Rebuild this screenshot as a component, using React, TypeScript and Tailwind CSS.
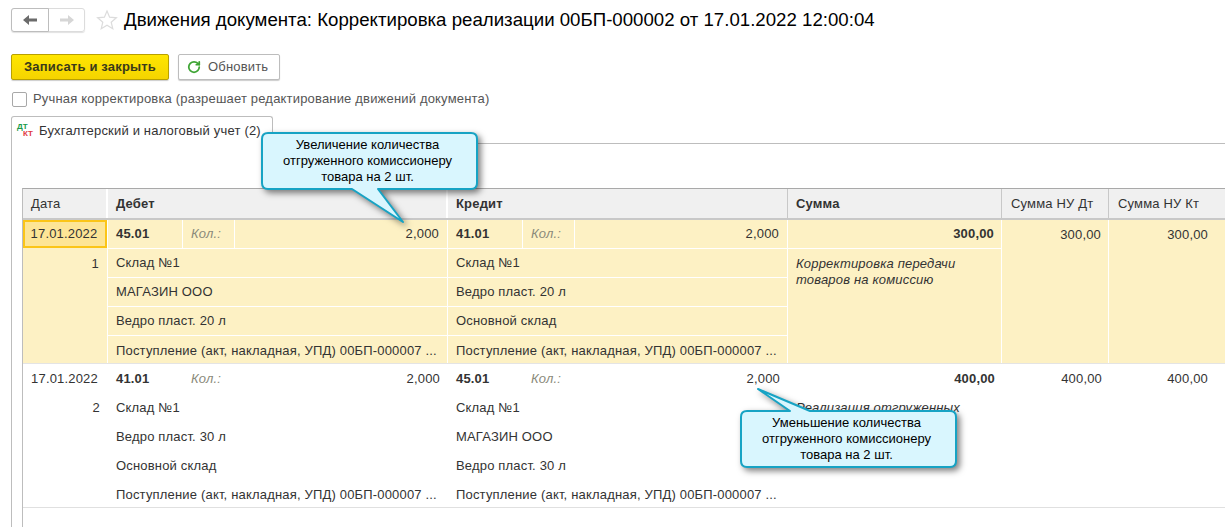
import type { ReactNode } from 'react';
import { RotateCw } from 'lucide-react';

const POST = 'Поступление (акт, накладная, УПД) 00БП-000007 ...';

type Entry = {
  date: string;
  num: string;
  debit: string;
  credit: string;
  debitLines: string[];
  creditLines: string[];
  sum: string;
  note: string[];
};

const entries: Entry[] = [
  {
    date: '17.01.2022',
    num: '1',
    debit: '45.01',
    credit: '41.01',
    debitLines: ['Склад №1', 'МАГАЗИН ООО', 'Ведро пласт. 20 л', POST],
    creditLines: ['Склад №1', 'Ведро пласт. 20 л', 'Основной склад', POST],
    sum: '300,00',
    note: ['Корректировка передачи', 'товаров на комиссию'],
  },
  {
    date: '17.01.2022',
    num: '2',
    debit: '41.01',
    credit: '45.01',
    debitLines: ['Склад №1', 'Ведро пласт. 30 л', 'Основной склад', POST],
    creditLines: ['Склад №1', 'МАГАЗИН ООО', 'Ведро пласт. 30 л', POST],
    sum: '400,00',
    note: ['Реализация отгруженных', 'товаров'],
  },
];

function Line({ children, divider, last }: { children: ReactNode; divider: boolean; last?: boolean }) {
  return (
    <div className={`flex h-[29px] items-center px-2 ${divider && !last ? 'border-b border-white' : ''}`}>
      {children}
    </div>
  );
}

function Account({ code, lines, divider }: { code: string; lines: string[]; divider: boolean }) {
  return (
    <div className={`w-[340px] ${divider ? 'border-r border-white' : ''}`}>
      <div className={`flex h-[29px] ${divider ? 'border-b border-white' : ''}`}>
        <div className={`flex w-[75px] items-center px-2 font-bold ${divider ? 'border-r border-white' : ''}`}>{code}</div>
        <div className={`flex w-[52px] items-center pl-2 italic text-[#8a8a7a] ${divider ? 'border-r border-white' : ''}`}>Кол.:</div>
        <div className="flex flex-1 items-center justify-end pr-2">2,000</div>
      </div>
      {lines.map((l, i) => (
        <Line key={i} divider={divider} last={i === lines.length - 1}>
          <span className="whitespace-nowrap">{l}</span>
        </Line>
      ))}
    </div>
  );
}

function EntryRow({ entry, selected }: { entry: Entry; selected: boolean }) {
  return (
    <div className={`flex h-[143px] ${selected ? 'bg-[#fdf1c4]' : 'bg-white'}`}>
      <div className={`w-[85px] ${selected ? 'border-r border-white' : ''}`}>
        {selected ? (
          <div className="flex h-[28px] items-center justify-center border-2 border-[#fbc518] bg-[#fde596] pr-[2px]">{entry.date}</div>
        ) : (
          <div className="flex h-[29px] items-center justify-center pr-[2px]">{entry.date}</div>
        )}
        <div className={`flex h-[29px] items-center justify-end pr-2 ${selected ? 'mt-px' : ''}`}>{entry.num}</div>
      </div>
      <Account code={entry.debit} lines={entry.debitLines} divider={selected} />
      <Account code={entry.credit} lines={entry.creditLines} divider={selected} />
      <div className={`w-[214px] ${selected ? 'border-r border-white' : ''}`}>
        <div className={`flex h-[29px] items-center justify-end pr-[7px] font-bold ${selected ? 'border-b border-white' : ''}`}>{entry.sum}</div>
        <div className="px-2 pt-[7px] leading-[16px] italic">
          {entry.note.map((n) => (
            <div key={n}>{n}</div>
          ))}
        </div>
      </div>
      <div className={`w-[107px] ${selected ? 'border-r border-white' : ''}`}>
        <div className="flex h-[29px] items-center justify-end pr-[7px]">{entry.sum}</div>
      </div>
      <div className="w-[117px]">
        <div className="flex h-[29px] items-center justify-end pr-[18px]">{entry.sum}</div>
      </div>
    </div>
  );
}

function Callout({ className, path, lines }: { className: string; path: string; lines: string[] }) {
  return (
    <div className={`absolute z-20 ${className}`}>
      <svg className="absolute left-0 top-0 overflow-visible drop-shadow-[3px_3px_3px_rgba(0,0,0,0.5)]" width="215" height="57">
        <path d={path} fill="#d9f6fe" stroke="#17a3c4" strokeWidth="2" strokeLinejoin="round" />
      </svg>
      <div className="absolute left-0 top-[4px] w-[211px] text-center text-[13px] leading-[16px] tracking-normal text-black">
        {lines.map((l) => (
          <div key={l} className="whitespace-nowrap">{l}</div>
        ))}
      </div>
    </div>
  );
}

export default function App() {
  return (
    <div className="relative h-[527px] w-[1225px] overflow-hidden bg-white text-[13px] tracking-[0.18px] text-[#333] [font-family:'Liberation_Sans',Arial,sans-serif]">
      {/* title bar */}
      <div className="flex h-[54px] items-start pl-[11px] pt-[8px]">
        <div className="flex h-[24px] w-[74px] rounded-[3px] border border-[#dcdcdc] shadow-[0_1px_1px_rgba(0,0,0,0.12)]">
          <div className="-m-px flex w-[38px] items-center justify-center rounded-l-[3px] border border-[#bdbdbd] bg-white">
            <svg width="14" height="10" viewBox="0 0 14 10">
              <path d="M0 5 L6 0 V3.5 H14 V6.5 H6 V10 Z" fill="#6b6b6b" />
            </svg>
          </div>
          <div className="flex flex-1 items-center justify-center pl-px">
            <svg width="14" height="10" viewBox="0 0 14 10">
              <path d="M14 5 L8 0 V3.5 H0 V6.5 H8 V10 Z" fill="#d6d6d6" />
            </svg>
          </div>
        </div>
        <svg className="ml-[11px] mt-[1px]" width="22" height="22" viewBox="0 0 22 22">
          <path d="M11 2 L13.6 8.2 L20.4 8.8 L15.2 13.2 L16.8 19.8 L11 16.3 L5.2 19.8 L6.8 13.2 L1.6 8.8 L8.4 8.2 Z" fill="none" stroke="#dcdcdc" strokeWidth="1.2" />
        </svg>
        <h1 className="ml-[6px] text-[18.67px] font-normal leading-[24px] tracking-normal text-black">
          Движения документа: Корректировка реализации 00БП-000002 от 17.01.2022 12:00:04
        </h1>
      </div>

      {/* command bar */}
      <div className="flex h-[26px] gap-[9px] pl-[11px]">
        <button type="button" className="h-[26px] w-[158px] rounded-[2px] border border-[#b8a000] bg-gradient-to-b from-[#ffe600] to-[#f5d400] font-bold text-[#3a3a1a] shadow-[0_1px_1px_rgba(0,0,0,0.2)]">
          Записать и закрыть
        </button>
        <button type="button" className="flex h-[26px] w-[102px] items-center gap-[7px] rounded-[2px] border border-[#bdbdbd] bg-white pl-[8px] text-[#555] shadow-[0_1px_1px_rgba(0,0,0,0.2)]">
          <RotateCw size={14} strokeWidth={3} color="#3fa535" />
          Обновить
        </button>
      </div>

      {/* checkbox */}
      <div className="mt-[12px] flex h-[14px] items-center gap-[6px] pl-[12px] text-[#555]">
        <span className="h-[15px] w-[15px] rounded-[2px] border border-[#a8a8a8] bg-white" />
        <span>Ручная корректировка (разрешает редактирование движений документа)</span>
      </div>

      {/* tab */}
      <div className="relative z-10 ml-[11px] mt-[10px] flex h-[28px] w-[262px] items-center rounded-t-[3px] border border-b-0 border-[#bdbdbd] bg-white pl-[5px]">
        <span className="relative mr-[5px] h-[18px] w-[17px] shrink-0 text-[8px] font-bold leading-[8px] tracking-normal">
          <span className="absolute left-0 top-[1px] text-[#1a9a4a]">ДТ</span>
          <span className="absolute left-[6px] top-[8px] text-[#e0393e]">КТ</span>
        </span>
        <span className="whitespace-nowrap">Бухгалтерский и налоговый учет (2)</span>
      </div>

      {/* panel */}
      <div className="-mt-px ml-[11px] h-[385px] border-l border-t border-[#bdbdbd] pl-[10px] pt-[44px]">
        <div className="h-[340px] w-[1204px] border-l border-t border-l-[#bdbdbd] border-t-[#a9a9a9]">
          <div className="flex h-[31px] border-b-2 border-[#c8c8c8] bg-[#f0f0f0]">
            <div className="flex w-[85px] items-center border-r-2 border-white pl-2">Дата</div>
            <div className="flex w-[340px] items-center border-r-2 border-[#fff] pl-2 font-bold">Дебет</div>
            <div className="flex w-[340px] items-center border-r border-[#c8c8c8] pl-2 font-bold">Кредит</div>
            <div className="flex w-[214px] items-center border-r border-[#c8c8c8] pl-2 font-bold">Сумма</div>
            <div className="flex w-[107px] items-center border-r border-[#c8c8c8] pl-[9px]">Сумма НУ Дт</div>
            <div className="flex w-[117px] items-center pl-[9px]">Сумма НУ Кт</div>
          </div>
          <EntryRow entry={entries[0]} selected />
          <div className="h-[1px] bg-[#e4e4e4]" />
          <EntryRow entry={entries[1]} selected={false} />
          <div className="h-[1px] bg-[#e0e0e0]" />
        </div>
      </div>

      <Callout
        className="left-[262px] top-[133px]"
        path="M6 0 H209 Q215 0 215 6 V50 Q215 56 209 56 H116 L141 89 L90 56 H6 Q0 56 0 50 V6 Q0 0 6 0 Z"
        lines={['Увеличение количества', 'отгруженного комиссионеру', 'товара на 2 шт.']}
      />
      <Callout
        className="left-[741px] top-[411px]"
        path="M6 0 H49 L17 -22 L69 0 H209 Q215 0 215 6 V50 Q215 56 209 56 H6 Q0 56 0 50 V6 Q0 0 6 0 Z"
        lines={['Уменьшение количества', 'отгруженного комиссионеру', 'товара на 2 шт.']}
      />
    </div>
  );
}
